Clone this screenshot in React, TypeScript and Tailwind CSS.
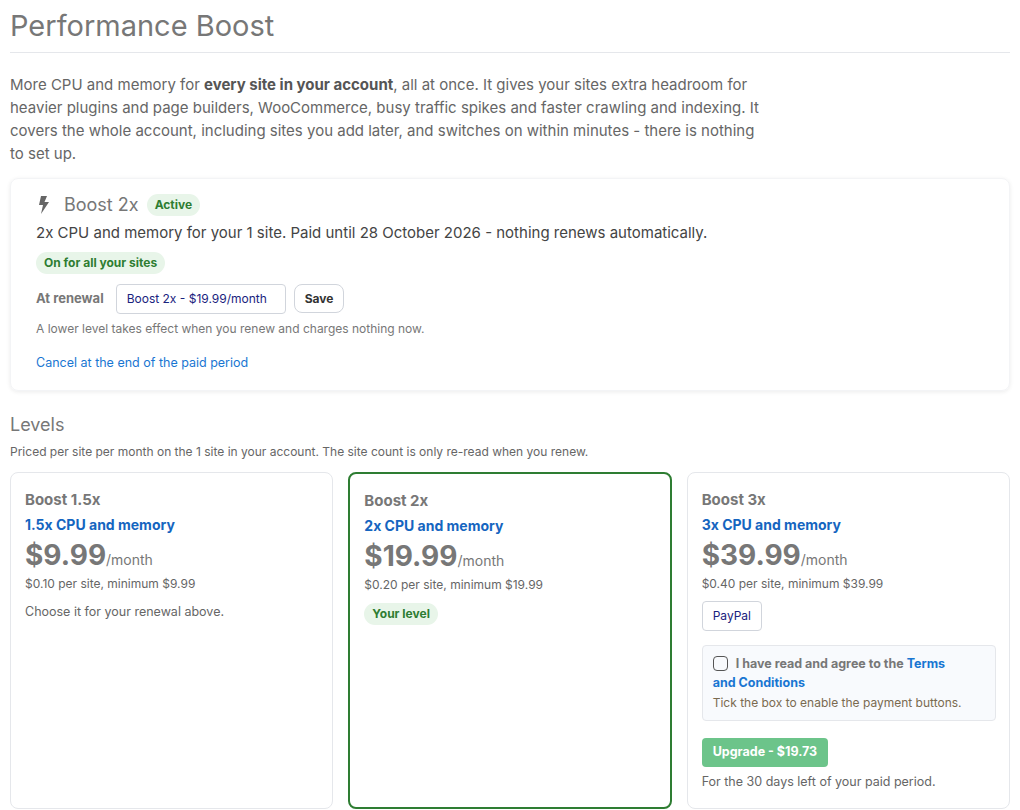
import React from "react"

const font = { fontFamily: "Inter, 'Noto Sans', sans-serif" }

function Level({ name, cpu, price, per, active, children }: { name: string; cpu: string; price: string; per: string; active?: boolean; children?: React.ReactNode }) {
    return (
        <div className={`rounded-lg bg-white px-[14px] pt-[16px] pb-4 ${active ? "border-2 border-[#2e7d32]" : "border border-gray-200"}`}>
            <div className="text-[15px] font-bold text-[#777]">{name}</div>
            <div className="text-[14px] font-bold text-[#1565c0] mt-0.5">{cpu}</div>
            <div className="flex items-baseline mt-0.5">
                <span className="text-[28px] font-bold text-[#777] leading-9">{price}</span>
                <span className="text-[14px] text-[#777]">/month</span>
            </div>
            <div className="text-[12px] text-[#666] mt-0.5">{per}</div>
            {children}
        </div>
    )
}

export default function App() {
    return (
        <div style={font} className="bg-white w-[1020px] h-[810px] px-[10px] text-[#555] overflow-hidden">
            <h1 className="text-[29px] leading-[36px] text-[#777] font-normal pt-[8px] pb-[8px] border-b border-gray-200">Performance Boost</h1>
            <p className="text-[15px] leading-[23px] text-[#666] mt-[20px] w-[752px]">
                More CPU and memory for <b className="text-[#555]">every site in your account</b>, all at once. It gives your sites extra headroom for heavier plugins and page builders, WooCommerce, busy traffic spikes and faster crawling and indexing. It covers the whole account, including sites you add later, and switches on within minutes - there is nothing to set up.
            </p>
            <div className="mt-[13px] rounded-lg border border-gray-100 shadow-[0_1px_4px_rgba(0,0,0,0.08)] px-[25px] pt-[12px] pb-[18px]">
                <div className="flex items-center gap-2">
                    <svg width="16" height="18" viewBox="0 0 16 18" className="mr-1"><path d="M5 0h6L8.5 6H13L5 18l2-9H3z" fill="#666" /></svg>
                    <span className="text-[18px] text-[#777]">Boost 2x</span>
                    <span className="text-[12px] font-bold text-[#2e7d32] bg-[#e8f5e9] rounded-full px-2 py-0.5">Active</span>
                </div>
                <div className="text-[15px] text-[#444] mt-[4px]">2x CPU and memory for your 1 site. Paid until 28 October 2026 - nothing renews automatically.</div>
                <span className="inline-block mt-[7px] text-[12px] font-bold text-[#2e7d32] bg-[#e8f5e9] rounded-full px-2 py-[2px]">On for all your sites</span>
                <div className="flex items-center gap-2 mt-[10px]">
                    <span className="text-[13px] font-bold text-[#777] mr-1">At renewal</span>
                    <div className="border border-gray-300 rounded px-[10px] h-[30px] flex items-center text-[12px] text-[#1a237e] w-[170px]">Boost 2x - $19.99/month</div>
                    <button className="border border-gray-300 rounded-lg px-[10px] h-[29px] text-[12px] font-bold text-[#333] bg-white">Save</button>
                </div>
                <div className="text-[12px] text-[#777] mt-[6px]">A lower level takes effect when you renew and charges nothing now.</div>
                <div className="text-[12.5px] text-[#1976d2] mt-[16px]">Cancel at the end of the paid period</div>
            </div>
            <h2 className="text-[18px] text-[#777] mt-[20px]">Levels</h2>
            <div className="text-[12px] text-[#666] mt-[5px]">Priced per site per month on the 1 site in your account. The site count is only re-read when you renew.</div>
            <div className="grid grid-cols-3 gap-[15px] mt-[11px] h-[332px]">
                <Level name="Boost 1.5x" cpu="1.5x CPU and memory" price="$9.99" per="$0.10 per site, minimum $9.99">
                    <div className="text-[12.5px] text-[#666] mt-[10px]">Choose it for your renewal above.</div>
                </Level>
                <Level name="Boost 2x" cpu="2x CPU and memory" price="$19.99" per="$0.20 per site, minimum $19.99" active>
                    <span className="inline-block mt-[9px] text-[12px] font-bold text-[#2e7d32] bg-[#e8f5e9] rounded-full px-2 py-[2px]">Your level</span>
                </Level>
                <Level name="Boost 3x" cpu="3x CPU and memory" price="$39.99" per="$0.40 per site, minimum $39.99">
                    <button className="mt-[8px] border border-gray-300 rounded px-[10px] h-[30px] text-[12px] text-[#1a237e] bg-white">PayPal</button>
                    <div className="mt-[14px] bg-[#f8fafd] border border-gray-200 rounded px-[10px] py-[8px] w-[294px]">
                        <div className="text-[12.5px] font-bold text-[#777] leading-[19px] pr-6">
                            <span className="inline-block w-[15px] h-[15px] border-[1.5px] border-[#555] rounded-sm align-middle mr-[8px] -mt-[2px]" />
                            I have read and agree to the <span className="text-[#1976d2]">Terms and Conditions</span>
                        </div>
                        <div className="text-[12px] text-[#7a6a50] mt-[2px]">Tick the box to enable the payment buttons.</div>
                    </div>
                    <button className="mt-[17px] bg-[#6cc48a] text-white font-bold text-[12.5px] rounded px-[11px] h-[29px]">Upgrade - $19.73</button>
                    <div className="text-[12.5px] text-[#666] mt-[6px]">For the 30 days left of your paid period.</div>
                </Level>
            </div>
        </div>
    )
}
